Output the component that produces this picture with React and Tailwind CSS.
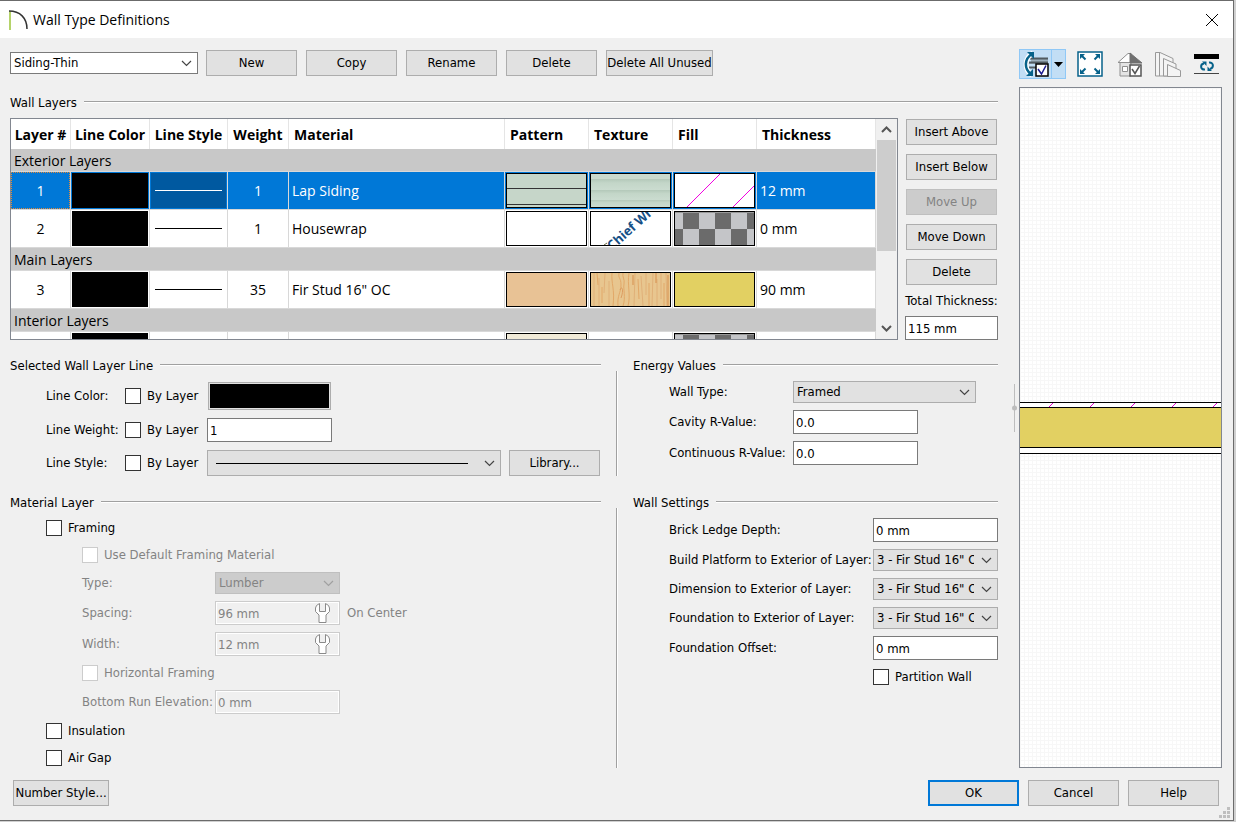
import { useState } from "react";

const UI_FONT = "font-['DejaVu_Sans_Condensed','DejaVu_Sans',sans-serif]";
const TABLE_FONT = "font-['Open_Sans','Noto_Sans',sans-serif]";

const COLUMNS = [
  { name: "Layer #", width: "w-[60px]", pad: "text-center" },
  { name: "Line Color", width: "w-[79px]", pad: "text-center" },
  { name: "Line Style", width: "w-[78px]", pad: "text-center" },
  { name: "Weight", width: "w-[61px]", pad: "text-center" },
  { name: "Material", width: "", pad: "pl-[5px] text-left" },
  { name: "Pattern", width: "w-[84px]", pad: "pl-[5px] text-left" },
  { name: "Texture", width: "w-[84px]", pad: "pl-[5px] text-left" },
  { name: "Fill", width: "w-[84px]", pad: "pl-[5px] text-left" },
  { name: "Thickness", width: "w-[119px]", pad: "pl-[5px] text-left" },
];

const SECTIONS = [
  {
    title: "Exterior Layers",
    layers: [
      { id: 1, weight: 1, material: "Lap Siding", thickness: "12 mm", pattern: <LapPattern />, texture: <LapTexture />, fill: <HatchFill /> },
      { id: 2, weight: 1, material: "Housewrap", thickness: "0 mm", pattern: <Solid color="bg-white" />, texture: <WrapTexture />, fill: <CheckerFill /> },
    ],
  },
  {
    title: "Main Layers",
    layers: [
      { id: 3, weight: 35, material: "Fir Stud 16\" OC", thickness: "90 mm", pattern: <Solid color="bg-[#e8c295]" />, texture: <WoodTexture />, fill: <Solid color="bg-[#e2d062]" /> },
    ],
  },
  {
    title: "Interior Layers",
    layers: [
      { id: 4, pattern: <Solid color="bg-[#f0ead8]" />, fill: <CheckerFill /> },
    ],
  },
];

function Solid({ color }) {
  return <div className={`h-full w-full ${color}`} />;
}

function LapPattern() {
  return (
    <svg className="block h-full w-full bg-[#c6d6c9]" viewBox="0 0 79 33" preserveAspectRatio="none">
      <path d="M0 14.5H79M0 30.5H79" stroke="#333" />
    </svg>
  );
}

function LapTexture() {
  return (
    <svg className="block h-full w-full" viewBox="0 0 79 33" preserveAspectRatio="none">
      <defs>
        <linearGradient id="lap" x1="0" y1="0" x2="0" y2="1">
          <stop offset="0" stopColor="#b3c8b9" />
          <stop offset="0.35" stopColor="#c3d6c8" />
          <stop offset="1" stopColor="#cbdcd0" />
        </linearGradient>
      </defs>
      <rect width="79" height="5" fill="#c9dacd" />
      <rect y="5" width="79" height="11" fill="url(#lap)" />
      <rect y="16" width="79" height="10" fill="url(#lap)" />
      <rect y="26" width="79" height="7" fill="url(#lap)" />
    </svg>
  );
}

function HatchFill() {
  return (
    <svg className="block h-full w-full bg-white" viewBox="0 0 79 33" preserveAspectRatio="none">
      <path d="M12 33L45 0M58 33L79 12" stroke="#f000e0" shapeRendering="crispEdges" />
    </svg>
  );
}

function WrapTexture() {
  return (
    <svg className="block h-full w-full bg-white" viewBox="0 0 79 33">
      <text x="21" y="39" transform="rotate(-42 21 39)" className="font-['Open_Sans',sans-serif] text-[13px] font-bold" fill="#164f86">
        Chief Wr
      </text>
      <path d="M13 33L16 31" stroke="#6b6b4a" />
    </svg>
  );
}

function CheckerFill() {
  return (
    <svg className="block h-full w-full bg-[#c4c5c8]" viewBox="0 0 79 33" preserveAspectRatio="none">
      <path d="M8 1H24V17H8ZM40 1H56V17H40ZM72 1H79V17H72ZM0 17H8V33H0ZM24 17H40V33H24ZM56 17H72V33H56Z" fill="#6b6b6b" />
      <path d="M0 .5H79" stroke="#999" />
    </svg>
  );
}

function WoodTexture() {
  return (
    <svg className="block h-full w-full bg-[#e8c68f]" viewBox="0 0 79 33" preserveAspectRatio="none" fill="none">
      <path d="M3 0V33M8 5V33M14 0L13 20M18 8V33M44 0L43 33M50 3L52 33M55 0V22M62 0L61 33M66 6V33M70 0V26M75 0L76 33" stroke="#e0b078" />
      <path d="M6 0L7 12M21 0C20 10 24 16 22 33M27 33C26 22 30 20 30 12S27 6 28 0M32 33C35 24 32 16 33 11S31 4 32 0M38 0C36 12 40 22 37 33M47 6L48 26M58 10V33M73 10V33M11 14V30" stroke="#e2a868" />
      <path d="M29 17C31 12 33 17 30 25" stroke="#dc9c60" />
      <path d="M77 2V33M42 2V12M65 0V10" stroke="#d68f4c" />
    </svg>
  );
}

function Swatch({ children }) {
  return <div className="h-[35px] border border-black">{children}</div>;
}

function Chevron({ className = "" }) {
  return (
    <svg className={`pointer-events-none h-[7px] w-[11px] ${className}`} viewBox="0 0 11 7" fill="none" stroke="currentColor">
      <path d="M1 1L5.500 5.500L10 1" strokeWidth="1.200" />
    </svg>
  );
}

function Button({ children, className = "w-[91px]", primary, disabled }) {
  return (
    <button
      type="button"
      disabled={disabled}
      className={`h-[26px] shrink-0 bg-[#e1e1e1] whitespace-nowrap disabled:border-[#bfbfbf] disabled:bg-[#cccccc] disabled:text-[#838383] ${primary ? "border-2 border-[#0078d7]" : "border border-[#adadad]"} ${className}`}
    >
      {children}
    </button>
  );
}

function Select({ id, value, className, tone = "border-[#adadad] bg-[#e1e1e1]", disabled, label }) {
  return (
    <div className={`relative shrink-0 ${className}`}>
      <select
        id={id}
        aria-label={label}
        disabled={disabled}
        className={`block h-[22px] w-full appearance-none border pr-[23px] pl-[3px] disabled:border-[#bfbfbf] disabled:bg-[#cccccc] disabled:text-[#838383] disabled:opacity-100 ${tone}`}
      >
        <option>{value}</option>
      </select>
      <Chevron className={`absolute top-[8px] right-[6px] ${disabled ? "text-[#a0a0a0]" : "text-[#444]"}`} />
    </div>
  );
}

function TextBox({ id, value, className = "w-[125px]", disabled, wrench }) {
  const [text, setText] = useState(value);
  return (
    <div className={`relative shrink-0 ${className}`}>
      <input
        id={id}
        type="text"
        value={text}
        disabled={disabled}
        onChange={(e) => setText(e.target.value)}
        className="block h-[24px] w-full border border-[#7a7a7a] bg-white px-[2px] outline-none disabled:border-[#cccccc] disabled:bg-[#f0f0f0] disabled:text-[#838383] disabled:inset-ring disabled:inset-ring-white"
      />
      {wrench && (
        <svg className="absolute top-[2px] right-[10px] h-[20px] w-[15px]" viewBox="0 0 15 20" fill="#fff" stroke="#8a8a8a">
          <path d="M4.500.500L1.500 2.500L.500 5V8.500L4 12V19.500H11V12L14.500 8.500V5L13.500 2.500L10.500.500V8.500H4.500Z" />
        </svg>
      )}
    </div>
  );
}

function CheckBox({ label, disabled }) {
  return (
    <label className={`flex h-[16px] items-center gap-[6px] whitespace-nowrap ${disabled ? "text-[#838383]" : ""}`}>
      <input
        type="checkbox"
        disabled={disabled}
        className="h-[16px] w-[16px] shrink-0 appearance-none border border-[#333] bg-white checked:bg-[#0078d7] disabled:border-[#cccccc]"
      />
      {label}
    </label>
  );
}

function Heading({ children }) {
  return (
    <h2 className="flex h-[16px] items-center gap-[7px] whitespace-nowrap">
      {children}
      <span className="mb-[2px] h-[2px] flex-1 border-t border-[#a0a0a0] bg-white" />
    </h2>
  );
}

function Field({ id, label, width, disabled, children }) {
  return (
    <div className={`flex items-center ${disabled ? "text-[#838383]" : ""}`}>
      <label htmlFor={id} className={`shrink-0 whitespace-nowrap ${width}`}>{label}</label>
      {children}
    </div>
  );
}

function Divider() {
  return <div className="mx-[15px] mt-[13px] w-[2px] shrink-0 border-l border-[#a0a0a0] bg-white" />;
}

function LayerRow({ layer, selected, onSelect }) {
  const cell = "h-[38px] border-r border-b border-[#d8d8d8] p-px";
  return (
    <tr onClick={onSelect} className={selected ? "bg-[#0078d7] text-white" : "bg-white"}>
      <td className={`${cell} text-center`}>
        <div className={`flex h-[35px] items-center justify-center ${selected ? "outline outline-dotted outline-[#e08a3c]" : ""}`}>
          {layer.weight && layer.id}
        </div>
      </td>
      <td className={cell}><div className="h-[35px] bg-black" /></td>
      <td className={cell}>
        <div className={`flex h-[35px] items-center px-[4px] ${selected ? "bg-[#0059a0]" : ""}`}>
          <div className={`h-px flex-1 ${selected ? "bg-white" : "bg-black"}`} />
        </div>
      </td>
      <td className={`${cell} text-center`}>{layer.weight}</td>
      <td className={`${cell} pl-[3px]`}>{layer.material}</td>
      <td className={cell}><Swatch>{layer.pattern}</Swatch></td>
      <td className={cell}>{layer.texture && <Swatch>{layer.texture}</Swatch>}</td>
      <td className={cell}><Swatch>{layer.fill}</Swatch></td>
      <td className={`${cell} pl-[3px]`}>{layer.thickness}</td>
    </tr>
  );
}

function LayerTable() {
  const [selected, setSelected] = useState(1);
  return (
    <div className="flex h-[222px] min-w-0 flex-1 border border-[#828790] bg-white">
      <div className={`flex-1 overflow-hidden text-[14px] leading-[20px] ${TABLE_FONT}`}>
        <table className="w-full table-fixed border-separate border-spacing-0">
          <thead>
            <tr>
              {COLUMNS.map((c) => (
                <th key={c.name} className={`h-[30px] overflow-hidden border-r border-[#e5e5e5] p-0 pt-[2px] font-bold whitespace-nowrap ${c.width} ${c.pad}`}>
                  {c.name}
                </th>
              ))}
            </tr>
          </thead>
          {SECTIONS.map((s) => (
            <tbody key={s.title}>
              <tr>
                <th colSpan={9} className="h-[23px] border-b border-[#d8d8d8] bg-[#c8c8c8] p-0 pt-[2px] pl-[3px] text-left font-normal">
                  {s.title}
                </th>
              </tr>
              {s.layers.map((l) => (
                <LayerRow key={l.id} layer={l} selected={l.id === selected} onSelect={() => setSelected(l.id)} />
              ))}
            </tbody>
          ))}
        </table>
      </div>
      <div className="flex w-[21px] shrink-0 flex-col bg-[#f0f0f0] px-px text-[#555]">
        <button type="button" aria-label="Scroll up" className="flex h-[21px] items-center justify-center">
          <svg className="h-[7px] w-[11px]" viewBox="0 0 11 7" fill="none" stroke="currentColor" strokeWidth="2">
            <path d="M1 6L5.500 1.500L10 6" />
          </svg>
        </button>
        <div className="h-[111px] bg-[#cdcdcd]" />
        <button type="button" aria-label="Scroll down" className="mt-auto flex h-[21px] items-center justify-center">
          <svg className="h-[7px] w-[11px]" viewBox="0 0 11 7" fill="none" stroke="currentColor" strokeWidth="2">
            <path d="M1 1L5.500 5.500L10 1" />
          </svg>
        </button>
      </div>
    </div>
  );
}

function PreviewTools() {
  return (
    <div className="flex h-[30px] items-center gap-[11px]">
      <div className="flex h-[30px] w-[47px] border border-[#90c8f6] bg-[#c2def5]">
        <button type="button" aria-label="Rotate wall" className="flex w-[31px] items-center justify-center">
          <svg className="h-[26px] w-[26px]" viewBox="0 0 26 26" fill="none">
            <path d="M8 7H25V11H8ZM5 11H25V13H5Z" fill="#9db0bd" />
            <path d="M7 7.500H25M6 11.500H25M6 16.500H14" stroke="#505a60" strokeWidth="2" />
            <path d="M10 2C1 7 1 19 9 24" stroke="#fff" strokeWidth="5" />
            <path d="M9 3C1 8 1 18 8 23" stroke="#07628a" strokeWidth="2.500" />
            <path d="M4 1H11V8ZM3 25H10V18Z" fill="#07628a" />
            <rect x="13" y="13" width="12" height="12" fill="#fff" stroke="#000" strokeWidth="1.500" />
            <path d="M15 18L18.500 23L23 14.500" stroke="#1a1a90" strokeWidth="1.500" />
          </svg>
        </button>
        <button type="button" aria-label="Rotate options" className="flex flex-1 items-center justify-center border-l border-[#90c8f6]">
          <svg className="h-[5px] w-[9px]" viewBox="0 0 9 5"><path d="M0 0H9L4.500 5Z" /></svg>
        </button>
      </div>
      <div className="flex gap-[13px]">
        <button type="button" aria-label="Fill window">
          <svg className="block h-[26px] w-[26px]" viewBox="0 0 26 26" fill="none">
            <rect x="1" y="1" width="24" height="24" fill="#fff" stroke="#07628a" strokeWidth="1.500" />
            <path d="M4 4L8.500 8.500M22 4L17.500 8.500M4 22L8.500 17.500M22 22L17.500 17.500" stroke="#07628a" strokeWidth="2" />
            <path d="M3 3H8L3 8ZM23 3V8L18 3ZM3 23V18L8 23ZM23 23H18L23 18Z" fill="#07628a" />
          </svg>
        </button>
        <button type="button" aria-label="Color">
          <svg className="block h-[26px] w-[26px]" viewBox="0 0 26 26" fill="none" stroke="#909090">
            <path d="M4 12V25H15V12" fill="#e4e4e4" />
            <path d="M2 11.500L12 2.500H15V11.500Z" fill="#fff" />
            <path d="M14 2L26 12H14Z" fill="#707070" stroke="#707070" />
            <path d="M6.500 15.500H11.500V20.500H6.500Z" fill="#fff" />
            <rect x="14" y="14" width="11" height="11" fill="#fff" stroke="#555" strokeWidth="1.500" />
            <path d="M16 18L19 22.500L23.500 15" stroke="#555" strokeWidth="1.500" />
          </svg>
        </button>
        <button type="button" aria-label="Layer stack">
          <svg className="block h-[26px] w-[26px]" viewBox="0 0 26 26" fill="#f4f4f4" stroke="#999">
            <path d="M.500 1.500H5L18 7.500V25H.500Z" />
            <path d="M4.500 1.500V25" />
            <path d="M8.500 7.500L21 13V25H8.500Z" />
            <path d="M12.500 13.500L25.500 19.500V25.500H12.500Z" />
          </svg>
        </button>
        <button type="button" aria-label="Reverse layers">
          <svg className="block h-[26px] w-[26px]" viewBox="0 0 26 26" fill="none">
            <path d="M0 5.500H25" stroke="#000" strokeWidth="5" />
            <path d="M0 22.500H25" stroke="#444" />
            <path d="M11 18.500C6 19 6 13 10 12.500M15 11.500C20 11 20 17 16 18" stroke="#07628a" strokeWidth="2" />
            <path d="M8 10.500H12.500V15ZM18 20H13.500V15.500Z" fill="#07628a" />
          </svg>
        </button>
      </div>
    </div>
  );
}

function Preview() {
  return (
    <div className="flex flex-1 items-center border border-[#828790] bg-white bg-[linear-gradient(#f7f7f7_1px,transparent_1px),linear-gradient(90deg,#f7f7f7_1px,transparent_1px)] bg-size-[4px_4px]">
      <div className="w-full">
        <svg className="block h-[6px] w-full border-y border-black bg-white">
          <defs>
            <pattern id="hatch" width="41" height="4" patternUnits="userSpaceOnUse">
              <path d="M29 4L33 0" stroke="#e000d0" />
            </pattern>
          </defs>
          <rect width="100%" height="4" fill="url(#hatch)" />
        </svg>
        <div className="h-[39px] bg-[#e2d062]" />
        <div className="h-[7px] border-y border-black bg-white" />
      </div>
    </div>
  );
}

function SelectedLine() {
  return (
    <section className="flex-1">
      <Heading>Selected Wall Layer Line</Heading>
      <div className="mt-[8px] flex flex-col gap-[8px] pr-px pl-[36px]">
        <div className="flex h-[28px] items-center">
          <span className="w-[79px]">Line Color:</span>
          <div className="w-[82px]"><CheckBox label="By Layer" /></div>
          <div className="w-[125px] px-px">
            <button type="button" aria-label="Line color" className="block h-[28px] w-full border border-[#adadad] bg-[#e1e1e1] p-px">
              <span className="block h-full bg-black" />
            </button>
          </div>
        </div>
        <div className="flex h-[24px] items-center">
          <label htmlFor="line-weight" className="w-[79px] whitespace-nowrap">Line Weight:</label>
          <div className="w-[82px]"><CheckBox label="By Layer" /></div>
          <TextBox id="line-weight" value="1" />
        </div>
        <div className="flex h-[26px] items-center">
          <span className="w-[79px]">Line Style:</span>
          <div className="w-[82px]"><CheckBox label="By Layer" /></div>
          <button type="button" aria-label="Line style" className="mr-[8px] flex h-[26px] flex-1 items-center border border-[#adadad] bg-[#e1e1e1] pr-[5px] pl-[8px]">
            <span className="mr-[16px] h-px flex-1 bg-black" />
            <Chevron className="text-[#444]" />
          </button>
          <Button>Library...</Button>
        </div>
      </div>
    </section>
  );
}

function EnergyValues() {
  return (
    <section className="w-[365px] shrink-0">
      <Heading>Energy Values</Heading>
      <div className="mt-[7px] flex flex-col gap-[7px] pl-[36px]">
        <Field id="wall-type" label="Wall Type:" width="w-[124px]">
          <Select id="wall-type" value="Framed" className="w-[183px]" />
        </Field>
        <Field id="cavity" label="Cavity R-Value:" width="w-[124px]">
          <TextBox id="cavity" value="0.0" />
        </Field>
        <Field id="continuous" label="Continuous R-Value:" width="w-[124px]">
          <TextBox id="continuous" value="0.0" />
        </Field>
      </div>
    </section>
  );
}

function MaterialLayer() {
  return (
    <section className="flex-1">
      <Heading>Material Layer</Heading>
      <div className="mt-[9px] flex flex-col gap-[9px] pl-[36px]">
        <CheckBox label="Framing" />
        <div className="mt-[2px] flex flex-col gap-[9px] pl-[36px]">
          <CheckBox label="Use Default Framing Material" disabled />
          <div className="flex flex-col gap-[7px]">
            <Field id="framing-type" label="Type:" width="w-[133px]" disabled>
              <Select id="framing-type" value="Lumber" className="w-[125px]" disabled />
            </Field>
            <Field id="spacing" label="Spacing:" width="w-[133px]" disabled>
              <TextBox id="spacing" value="96 mm" disabled wrench />
              <span className="ml-[7px]">On Center</span>
            </Field>
            <Field id="framing-width" label="Width:" width="w-[133px]" disabled>
              <TextBox id="framing-width" value="12 mm" disabled wrench />
            </Field>
          </div>
          <CheckBox label="Horizontal Framing" disabled />
          <Field id="elevation" label="Bottom Run Elevation:" width="w-[133px]" disabled>
            <TextBox id="elevation" value="0 mm" disabled />
          </Field>
        </div>
        <div className="flex flex-col gap-[11px]">
          <CheckBox label="Insulation" />
          <CheckBox label="Air Gap" />
        </div>
      </div>
    </section>
  );
}

function WallSettings() {
  return (
    <section className="w-[365px] shrink-0">
      <Heading>Wall Settings</Heading>
      <div className="mt-[7px] flex flex-col gap-[7px] pl-[36px]">
        <Field id="ledge" label="Brick Ledge Depth:" width="w-[204px]">
          <TextBox id="ledge" value="0 mm" />
        </Field>
        <Field id="platform" label="Build Platform to Exterior of Layer:" width="w-[204px]">
          <Select id="platform" value={'3 - Fir Stud 16" OC'} className="w-[125px]" />
        </Field>
        <Field id="dimension" label="Dimension to Exterior of Layer:" width="w-[204px]">
          <Select id="dimension" value={'3 - Fir Stud 16" OC'} className="w-[125px]" />
        </Field>
        <Field id="foundation" label="Foundation to Exterior of Layer:" width="w-[204px]">
          <Select id="foundation" value={'3 - Fir Stud 16" OC'} className="w-[125px]" />
        </Field>
        <Field id="offset" label="Foundation Offset:" width="w-[204px]">
          <TextBox id="offset" value="0 mm" />
        </Field>
      </div>
      <div className="mt-[9px] pl-[240px]">
        <CheckBox label="Partition Wall" />
      </div>
    </section>
  );
}

function App() {
  return (
    <div className={`flex min-h-screen bg-[#d0d0d0] pr-[2px] pb-px text-[13px] leading-[16px] text-black ${UI_FONT}`}>
      <div className="relative flex flex-1 flex-col border-t border-r border-b border-[#6b6b6b] bg-[#f0f0f0]">
        <header className="flex h-[37px] items-center bg-white pr-[15px] pl-[9px]">
          <svg className="h-[20px] w-[20px]" viewBox="0 0 20 20" fill="none">
            <path d="M1 1V20" stroke="#b5d36a" strokeWidth="2" />
            <path d="M0 1C11 1 18 8 18 19" stroke="#333" strokeWidth="1.500" />
          </svg>
          <h1 className={`ml-[4px] flex-1 text-[14px] leading-[20px] ${TABLE_FONT}`}>Wall Type Definitions</h1>
          <button type="button" aria-label="Close">
            <svg className="block h-[12px] w-[12px]" viewBox="0 0 12 12" stroke="#000">
              <path d="M0 0L12 12M12 0L0 12" />
            </svg>
          </button>
        </header>

        <div className="flex flex-1">
          <main className="flex-1 pt-[12px] pl-[10px]">
            <div className="flex items-center gap-[8px]">
              <Select label="Wall type" value="Siding-Thin" className="w-[188px]" tone="border-[#7a7a7a] bg-white" />
              <div className="flex gap-[9px]">
                <Button>New</Button>
                <Button>Copy</Button>
                <Button>Rename</Button>
                <Button>Delete</Button>
                <Button className="w-[107px]">Delete All Unused</Button>
              </div>
            </div>

            <section className="mt-[19px]">
              <Heading>Wall Layers</Heading>
              <div className="mt-[7px] flex">
                <LayerTable />
                <div className="ml-[7px] flex w-[93px] shrink-0 flex-col items-center pt-px">
                  <div className="flex flex-col gap-[9px]">
                    <Button>Insert Above</Button>
                    <Button>Insert Below</Button>
                    <Button disabled>Move Up</Button>
                    <Button>Move Down</Button>
                    <Button>Delete</Button>
                  </div>
                  <label htmlFor="total" className="mt-[8px] mb-auto whitespace-nowrap">Total Thickness:</label>
                  <TextBox id="total" value="115 mm" className="w-full" />
                </div>
              </div>
            </section>

            <div className="mt-[18px] flex">
              <SelectedLine />
              <Divider />
              <EnergyValues />
            </div>
            <div className="mt-[19px] flex h-[273px]">
              <MaterialLayer />
              <Divider />
              <WallSettings />
            </div>
          </main>

          <div className="flex w-[21px] shrink-0 items-center justify-end pt-[10px] pr-[2px]">
            <svg className="h-[48px] w-[5px]" viewBox="0 0 5 48">
              <path d="M2.500 0V48" stroke="#bdbdbd" />
              <circle cx="2.500" cy="24" r="2.500" fill="#bdbdbd" />
            </svg>
          </div>

          <aside className="flex w-[203px] shrink-0 flex-col gap-[8px] pt-[11px]">
            <PreviewTools />
            <Preview />
          </aside>
          <div className="w-[11px] shrink-0" />
        </div>

        <footer className="flex items-center gap-[9px] pt-[12px] pr-[14px] pb-[14px] pl-[13px]">
          <Button className="mr-auto w-[96px]">Number Style...</Button>
          <Button primary>OK</Button>
          <Button>Cancel</Button>
          <Button>Help</Button>
        </footer>
        <svg className="absolute right-[3px] bottom-[2px] h-[11px] w-[11px]" viewBox="0 0 11 11" fill="#bfbfbf">
          <path d="M8 0H11V3H8ZM4 4H7V7H4ZM8 4H11V7H8ZM0 8H3V11H0ZM4 8H7V11H4ZM8 8H11V11H8Z" />
        </svg>
      </div>
    </div>
  );
}

export default App;
